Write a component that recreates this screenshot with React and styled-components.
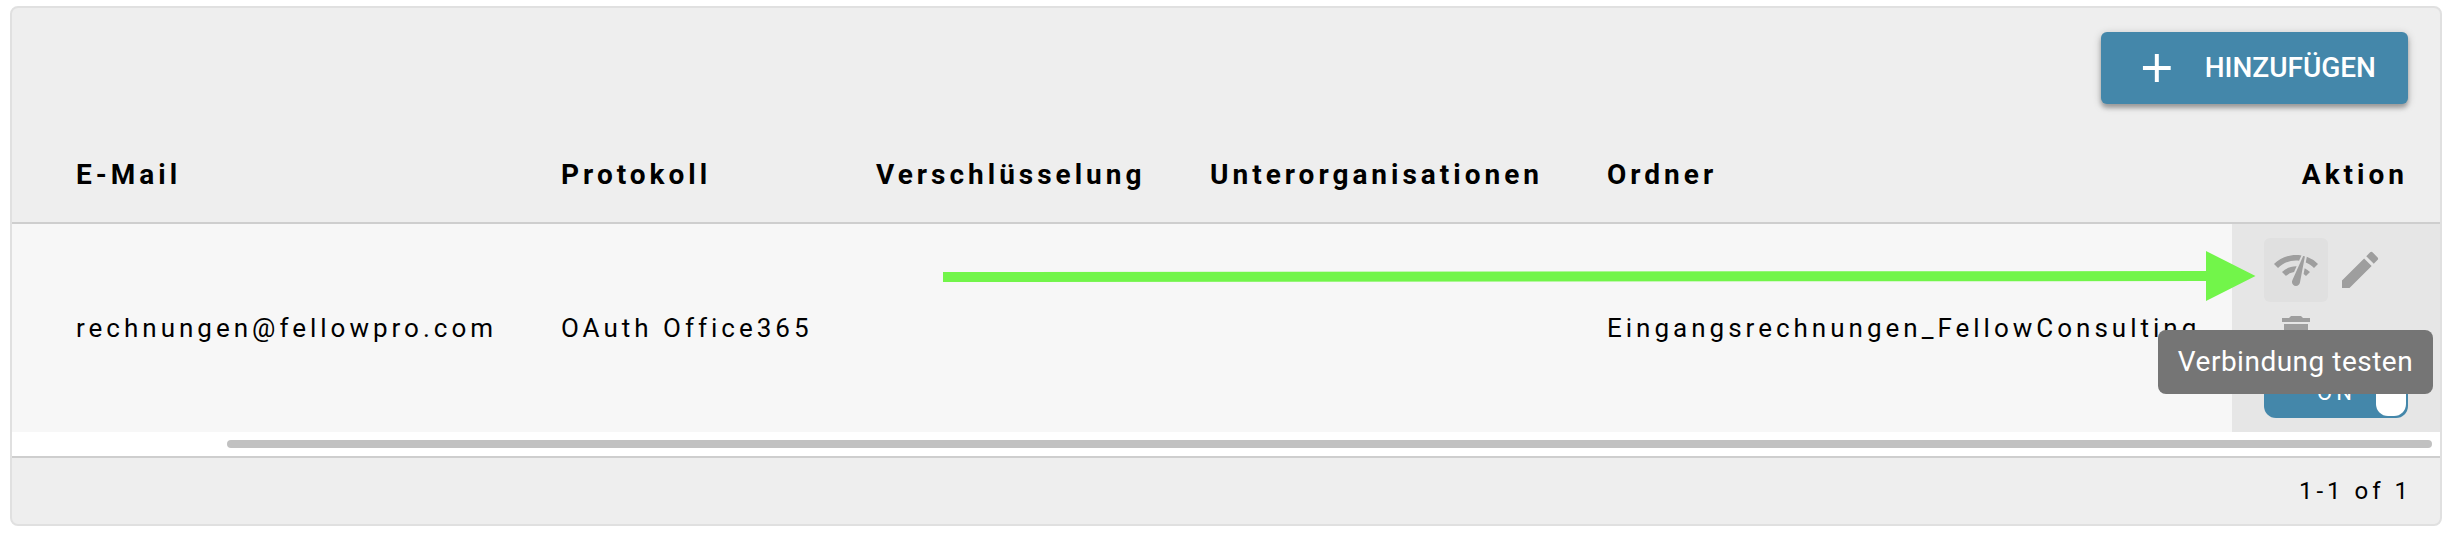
import React from "react";
import styled, { createGlobalStyle } from "styled-components";
import { MdAdd, MdDelete, MdEdit, MdNetworkCheck } from "react-icons/md";

const GlobalStyle = createGlobalStyle`
  *, *::before, *::after { box-sizing: border-box; }
  body {
    margin: 0;
    background: #fff;
    color: #000;
    font-family: Roboto, "Liberation Sans", sans-serif;
  }
`;

const Page = styled.main`
  position: relative;
  width: 2452px;
  height: 534px;
  padding: 6px 10px 8px;
`;

const Card = styled.section`
  display: flex;
  flex-direction: column;
  height: 520px;
  border: 2px solid #e0e0e0;
  border-radius: 8px;
  background: #eee;
  overflow: hidden;
`;

const Toolbar = styled.header`
  display: flex;
  justify-content: flex-end;
  height: 119px;
  padding: 24px 32px 0;
`;

const AddButton = styled.button`
  display: flex;
  align-items: center;
  gap: 24px;
  width: 307px;
  height: 72px;
  padding: 0 32px;
  border: 0;
  border-radius: 6px;
  background: #4487aa;
  color: #fff;
  font: 500 28px Roboto, sans-serif;
  white-space: nowrap;
  box-shadow: 0 2px 8px rgba(0, 0, 0, 0.22), 0 4px 4px rgba(0, 0, 0, 0.24);

  span { padding-bottom: 2px; }
`;

const Row = styled.div`
  display: grid;
  grid-template-columns: 485px 315px 334px 397px 625px 208px;
  padding-left: 64px;
`;

const HeaderRow = styled(Row)`
  height: 97px;
  border-bottom: 2px solid #cecece;
  font-size: 28px;
  font-weight: 700;
  letter-spacing: 4px;
`;

const BodyRow = styled(Row)`
  height: 208px;
  background: #f7f7f7;
  font-size: 26px;
  letter-spacing: 4px;
`;

const Cell = styled.div`
  display: flex;
  align-items: center;
  justify-content: ${({ $end }) => ($end ? "flex-end" : "flex-start")};
  padding-right: ${({ $end }) => ($end ? "32px" : "0")};
  white-space: nowrap;
`;

const ActionCell = styled.div`
  display: flex;
  flex-wrap: wrap;
  align-content: flex-start;
  padding: 14px 32px 0;
  background: #e6e6e6;
`;

const IconButton = styled.button`
  display: flex;
  align-items: center;
  justify-content: center;
  width: 64px;
  height: 64px;
  padding: 0;
  border: 0;
  border-radius: 6px;
  background: ${({ $hovered }) => ($hovered ? "#e0e0e0" : "transparent")};
  color: #9e9e9e;
`;

const Switch = styled.div`
  display: flex;
  align-items: center;
  justify-content: space-between;
  width: 144px;
  height: 52px;
  padding: 2px 2px 2px 53px;
  border-radius: 12px;
  background: #4487aa;
  color: #fff;
  font-size: 22px;
  letter-spacing: 4px;
`;

const Knob = styled.span`
  width: 30px;
  height: 48px;
  border-radius: 12px;
  background: #fff;
`;

const ScrollTrack = styled.div`
  height: 24px;
  padding: 8px 8px 8px 215px;
  background: #fff;
`;

const ScrollThumb = styled.div`
  height: 8px;
  border-radius: 4px;
  background: #c1c1c1;
`;

const Footer = styled.footer`
  display: flex;
  flex: 1;
  align-items: center;
  justify-content: flex-end;
  padding-right: 28px;
  border-top: 2px solid #cecece;
  font-size: 24px;
  letter-spacing: 4px;
`;

const Tooltip = styled.div`
  position: absolute;
  left: 2158px;
  top: 330px;
  display: flex;
  align-items: center;
  justify-content: center;
  width: 275px;
  height: 64px;
  padding-bottom: 2px;
  border-radius: 8px;
  background: #757575;
  color: #fff;
  font-size: 28px;
  letter-spacing: 0.5px;
  white-space: nowrap;
`;

const Arrow = styled.svg`
  position: absolute;
  left: 943px;
  top: 251px;
`;

const columns = ["E-Mail", "Protokoll", "Verschlüsselung", "Unterorganisationen", "Ordner"];
const account = ["rechnungen@fellowpro.com", "OAuth Office365", "", "", "Eingangsrechnungen_FellowConsulting"];

export default function App() {
  return (
    <Page>
      <GlobalStyle />
      <Card>
        <Toolbar>
          <AddButton>
            <MdAdd size={48} />
            <span>HINZUFÜGEN</span>
          </AddButton>
        </Toolbar>
        <HeaderRow>
          {columns.map((name) => (
            <Cell key={name}><span>{name}</span></Cell>
          ))}
          <Cell $end><span>Aktion</span></Cell>
        </HeaderRow>
        <BodyRow>
          {account.map((value, i) => (
            <Cell key={columns[i]}><span>{value}</span></Cell>
          ))}
          <ActionCell>
            <IconButton $hovered aria-label="Verbindung testen"><MdNetworkCheck size={48} /></IconButton>
            <IconButton aria-label="Bearbeiten"><MdEdit size={48} /></IconButton>
            <IconButton aria-label="Löschen"><MdDelete size={48} /></IconButton>
            <Switch><span>ON</span><Knob /></Switch>
          </ActionCell>
        </BodyRow>
        <ScrollTrack><ScrollThumb /></ScrollTrack>
        <Footer><span>1-1 of 1</span></Footer>
      </Card>
      <Arrow width="1313" height="50" viewBox="0 0 1313 50" fill="#72f54a">
        <path d="M0 21L1263 20V0L1312.500 25L1263 50V30L0 31z" />
      </Arrow>
      <Tooltip>Verbindung testen</Tooltip>
    </Page>
  );
}
